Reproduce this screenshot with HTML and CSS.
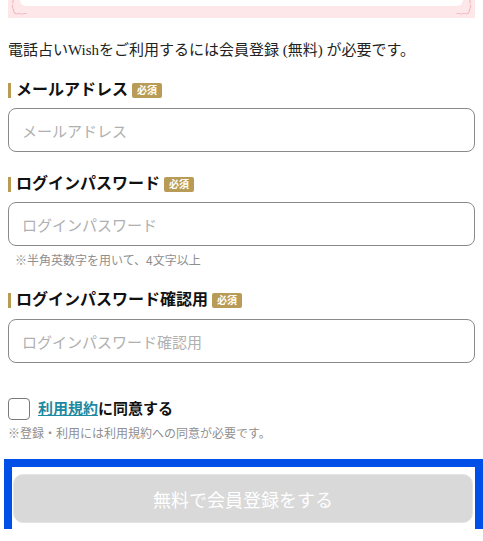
FILE: index.html
```html
<!DOCTYPE html>
<html lang="ja">
<head>
<meta charset="utf-8">
<title>会員登録</title>
<link rel="stylesheet" href="styles.css">
</head>
<body>
<div class="page">
  <div class="top-frame">
    <div class="top-inner"></div>
    <svg class="corner corner-left" width="18" height="16" viewBox="0 0 18 16"><path d="M4 0 V3 M3.5 5 V8 M4.5 9 V11 M5 12 Q6 14 8 14 M9 13.5 H11 M12 14 H14 M15 13.5 H17" stroke="#f2b9c2" stroke-width="1.2" fill="none" stroke-linecap="round"/></svg>
    <svg class="corner corner-right" width="18" height="16" viewBox="0 0 18 16"><path d="M14 0 V3 M14.5 5 V8 M13.5 9 V11 M13 12 Q12 14 10 14 M9 13.5 H7 M6 14 H4 M3 13.5 H1" stroke="#f2b9c2" stroke-width="1.2" fill="none" stroke-linecap="round"/></svg>
  </div>

  <p class="intro">電話占いWishをご利用するには会員登録 (無料) が必要です。</p>

  <div class="field field-first">
    <div class="label"><span class="bar"></span><span class="label-text">メールアドレス</span><span class="badge">必須</span></div>
    <input class="text-input" type="email" placeholder="メールアドレス">
  </div>

  <div class="field">
    <div class="label"><span class="bar"></span><span class="label-text">ログインパスワード</span><span class="badge">必須</span></div>
    <input class="text-input" type="text" placeholder="ログインパスワード">
    <p class="hint hint-indent">※半角英数字を用いて、4文字以上</p>
  </div>

  <div class="field">
    <div class="label"><span class="bar"></span><span class="label-text">ログインパスワード確認用</span><span class="badge">必須</span></div>
    <input class="text-input text-input-last" type="text" placeholder="ログインパスワード確認用">
  </div>

  <label class="agree">
    <input class="check" type="checkbox">
    <span class="agree-text"><a class="terms" href="#">利用規約</a>に同意する</span>
  </label>
  <p class="hint hint-agree">※登録・利用には利用規約への同意が必要です。</p>

  <div class="footer">
    <button class="submit" type="button">無料で会員登録をする</button>
  </div>
</div>
</body>
</html>
```

FILE: styles.css
```css
html, body {
  margin: 0;
  padding: 0;
  background: #ffffff;
}

.page {
  padding: 0 8px;
  font-family: "Liberation Serif", "Noto Sans CJK JP", serif;
  color: #222222;
}

.top-frame {
  position: relative;
  height: 18px;
  background: #fde7e8;
}

.top-inner {
  margin: 0 12px;
  height: 6px;
  background: #ffffff;
  border-radius: 0 0 10px 10px;
}

.corner {
  position: absolute;
  top: 0;
}

.corner-left {
  left: 1px;
}

.corner-right {
  right: 1px;
}

.intro {
  margin: 21px 0 0;
  font-size: 15px;
  line-height: 22px;
  color: #222222;
}

.field {
  margin-top: 19px;
}

.field + .field {
  margin-top: 22px;
}

.label {
  display: flex;
  align-items: center;
  height: 20px;
}

.bar {
  width: 3px;
  height: 15px;
  background: #b89b56;
  margin-right: 5px;
}

.label-text {
  font-size: 16px;
  font-weight: 700;
  color: #111111;
  line-height: 20px;
}

.badge {
  margin-left: 4px;
  width: 30px;
  height: 15px;
  border-radius: 2px;
  background: #b89b56;
  color: #ffffff;
  font-size: 10px;
  font-weight: 700;
  line-height: 15px;
  text-align: center;
}

.text-input {
  display: block;
  box-sizing: border-box;
  width: 100%;
  height: 44px;
  margin: 8px 0 0;
  padding: 0 13px;
  border: 1px solid #8a8a8a;
  border-radius: 8px;
  font-family: "Noto Sans CJK JP", sans-serif;
  font-size: 15px;
  color: #333333;
  background: #ffffff;
  outline: none;
}

.text-input-last {
  margin-top: 9px;
}

.text-input::placeholder {
  color: #b0b0b0;
}

.hint {
  margin: 0;
  font-family: "Noto Sans CJK JP", sans-serif;
  font-size: 12px;
  line-height: 16px;
  color: #8f8f8f;
}

.hint-indent {
  margin-top: 6px;
  padding-left: 7px;
}

.agree {
  display: flex;
  align-items: center;
  margin-top: 35px;
  height: 22px;
}

.check {
  appearance: none;
  -webkit-appearance: none;
  box-sizing: border-box;
  width: 22px;
  height: 22px;
  margin: 0 8px 0 0;
  border: 1px solid #7a7a7a;
  border-radius: 4px;
  background: #ffffff;
}

.agree-text {
  font-size: 15px;
  font-weight: 700;
  color: #111111;
  line-height: 22px;
}

.terms {
  color: #1d8aa2;
  text-decoration: underline;
}

.hint-agree {
  margin-top: 5px;
}

.footer {
  margin: 26px 0 0 4px;
  width: 463px;
  box-sizing: border-box;
  padding: 7px 2px 6px 1px;
  outline: 8px solid #0050e8;
  background: #ffffff;
}

.submit {
  display: block;
  box-sizing: border-box;
  width: 100%;
  height: 49px;
  border: 1px solid #e4e4e4;
  border-radius: 10px;
  background: #d9d9d9;
  color: #ffffff;
  font-family: "Noto Sans CJK JP", sans-serif;
  font-size: 18px;
  padding: 0;
}
```
